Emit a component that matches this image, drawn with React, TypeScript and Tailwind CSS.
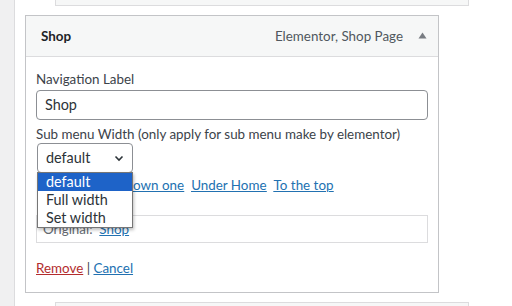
const FONT = "font-['Lato','Noto_Sans',sans-serif]";

const Chevron = () => (
	<svg width="12" height="12" viewBox="0 0 12 12" className="text-[#2c3338]">
		<path d="M2.5 4.5 L6 8 L9.5 4.5" fill="none" stroke="currentColor" strokeWidth="1.6" />
	</svg>
)

const App = () => {
	return (
		<div className={`flex w-[512px] h-[306px] overflow-hidden bg-white text-[#3c434a] text-[13.4px] ${FONT}`}>
			{/* left admin strip */}
			<div className="w-[15px] shrink-0 bg-[#f0f0f1] border-r border-[#dcdcde]" />

			<div className="flex-1 flex flex-col">
				{/* previous item (cut off) */}
				<div className="ml-[40px] w-[414px] h-[6px] shrink-0 bg-[#f6f7f7] border border-t-0 border-[#dcdcde]" />

				{/* current item */}
				<div className="ml-[10px] mt-[9px] w-[414px] shrink-0 border border-[#c3c4c7]">
					{/* header */}
					<div className="h-[41px] flex items-center justify-between pl-[15px] pr-[11px] bg-[#f6f7f7] border-b border-[#dcdcde]">
						<span className="font-bold text-[#1d2327]">Shop</span>
						<div className="flex items-center gap-[15px] text-[#50575e]">
							<span>Elementor, Shop Page</span>
							<svg width="9" height="7" viewBox="0 0 9 7" className="text-[#787c82]">
								<path d="M4.5 0.5 L8.5 6.5 L0.5 6.5 Z" fill="currentColor" />
							</svg>
						</div>
					</div>

					{/* settings */}
					<div className="px-[10px] pt-[13px] pb-[15px]">
						<div className="leading-[18px] h-[18px]">Navigation Label</div>
						<div className="mt-[2px] h-[30px] flex items-center px-[8px] border border-[#8c8f94] rounded-[4px] text-[14.4px] text-[#2c3338]">
							Shop
						</div>

						<div className="mt-[5px] leading-[18px] h-[18px]">Sub menu Width (only apply for sub menu make by elementor)</div>
						<div className="relative ml-[1px] w-[96px]">
							<div className="h-[30px] flex items-center justify-between pl-[8px] pr-[7px] border border-[#8c8f94] rounded-[4px] text-[14.4px] text-[#2c3338]">
								<span>default</span>
								<Chevron />
							</div>
							{/* open select list */}
							<div className="absolute left-0 top-[29px] w-[96px] z-10 bg-white border border-[#767676] text-[14.4px] text-[#2c3338] shadow-[1px_2px_3px_rgba(0,0,0,0.25)]">
								<div className="h-[18px] leading-[18px] pl-[8px] bg-[#1e63c8] text-white">default</div>
								<div className="h-[18px] leading-[18px] pl-[8px]">Full width</div>
								<div className="h-[18px] leading-[18px] pl-[8px]">Set width</div>
							</div>
						</div>

						{/* move links (first part hidden under the open list) */}
						<div className="mt-[3px] h-[18px] leading-[18px] flex items-center">
							<span className="w-[87px] shrink-0" />
							<div className="flex gap-[7px] text-[#2271b1] underline">
								<a>Down one</a>
								<a>Under Home</a>
								<a>To the top</a>
							</div>
						</div>

						<div className="mt-[21px] h-[28px] flex items-center px-[6px] border border-[#dcdcde] text-[#646970]">
							Original:&nbsp;&nbsp;<a className="text-[#2271b1] underline">Shop</a>
						</div>

						<div className="mt-[16px] h-[18px] leading-[18px]">
							<a className="text-[#b32d2e] underline">Remove</a>
							<span className="text-[#3c434a]"> | </span>
							<a className="text-[#2271b1] underline">Cancel</a>
						</div>
					</div>
				</div>

				{/* next item (cut off) */}
				<div className="ml-[40px] mt-[9px] w-[414px] h-[10px] shrink-0 bg-[#f6f7f7] border border-b-0 border-[#dcdcde]" />
			</div>
		</div>
	)
}

export default App;
